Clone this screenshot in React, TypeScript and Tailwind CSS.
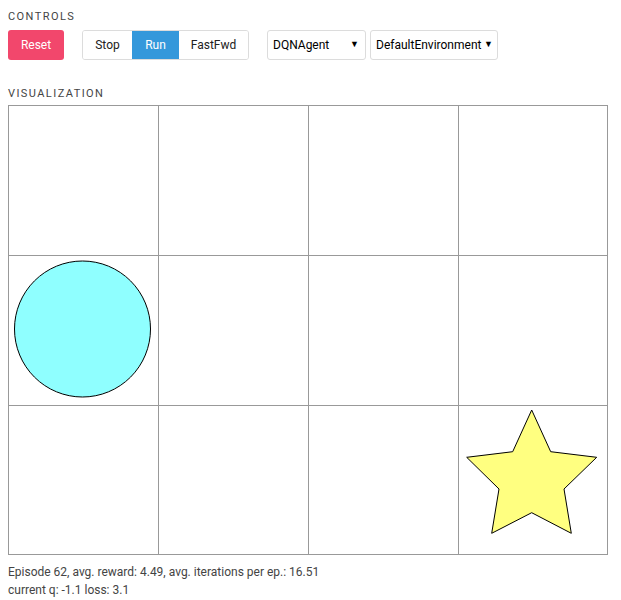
import React from "react";

export default function App() {
  const font = { fontFamily: "Roboto, 'Liberation Sans', sans-serif" };
  const starPts = "531.7,410 550.7,451.7 596.7,457.3 564,489 571.3,533.3 531.7,512.7 491.7,533.3 499,489 466.7,457.3 512.7,451.7";
  return (
    <div className="bg-white w-[621px] h-[600px] px-2 pt-[9px] text-[#333]" style={font}>
      <div className="text-[11px] leading-[16px] tracking-[0.13em] text-[#444]">CONTROLS</div>
      <div className="flex items-center mt-[5px] h-[30px]">
        <button className="h-[30px] w-[56px] rounded-[3px] bg-[#f2476c] text-white text-[12px]">Reset</button>
        <div className="flex ml-[18px] h-[30px] rounded-[3px] border border-[#dcdcdc] overflow-hidden">
          <button className="w-[49px] text-[12px] text-[#222] bg-white">Stop</button>
          <button className="w-[47px] text-[12px] text-white bg-[#3498db]">Run</button>
          <button className="w-[69px] text-[12px] text-[#222] bg-white">FastFwd</button>
        </div>
        <div className="flex items-center justify-between ml-[18px] h-[30px] w-[99px] rounded-[3px] border border-[#dcdcdc] pl-[5px] pr-[6px] text-[12px] text-black">
          <span>DQNAgent</span>
          <span className="text-[9px]">▼</span>
        </div>
        <div className="flex items-center justify-between ml-[4px] h-[30px] w-[128px] rounded-[3px] border border-[#dcdcdc] pl-[5px] pr-[4px] text-[12px] text-black">
          <span>DefaultEnvironment</span>
          <span className="text-[9px]">▼</span>
        </div>
      </div>
      <div className="mt-[26px] text-[11px] leading-[16px] tracking-[0.13em] text-[#444]">VISUALIZATION</div>
      <svg width="600" height="450" className="block mt-[3px]" viewBox="8 105 600 450">
        <g stroke="#999" strokeWidth="1" fill="none">
          <line x1="8.5" y1="105" x2="8.5" y2="555" />
          <line x1="158.5" y1="105" x2="158.5" y2="555" />
          <line x1="308.5" y1="105" x2="308.5" y2="555" />
          <line x1="458.5" y1="105" x2="458.5" y2="555" />
          <line x1="607.5" y1="105" x2="607.5" y2="555" />
          <line x1="8" y1="105.5" x2="608" y2="105.5" />
          <line x1="8" y1="255.5" x2="608" y2="255.5" />
          <line x1="8" y1="405.5" x2="608" y2="405.5" />
          <line x1="8" y1="554.5" x2="608" y2="554.5" />
        </g>
        <circle cx="82.5" cy="329" r="68" fill="#8fffff" stroke="#000" strokeWidth="1" />
        <polygon points={starPts} fill="#ffff80" stroke="#000" strokeWidth="1" />
      </svg>
      <div className="mt-[8px] text-[12px] leading-[18px] text-[#444]">
        <div>Episode 62, avg. reward: 4.49, avg. iterations per ep.: 16.51</div>
        <div>current q: -1.1 loss: 3.1</div>
      </div>
    </div>
  );
}
